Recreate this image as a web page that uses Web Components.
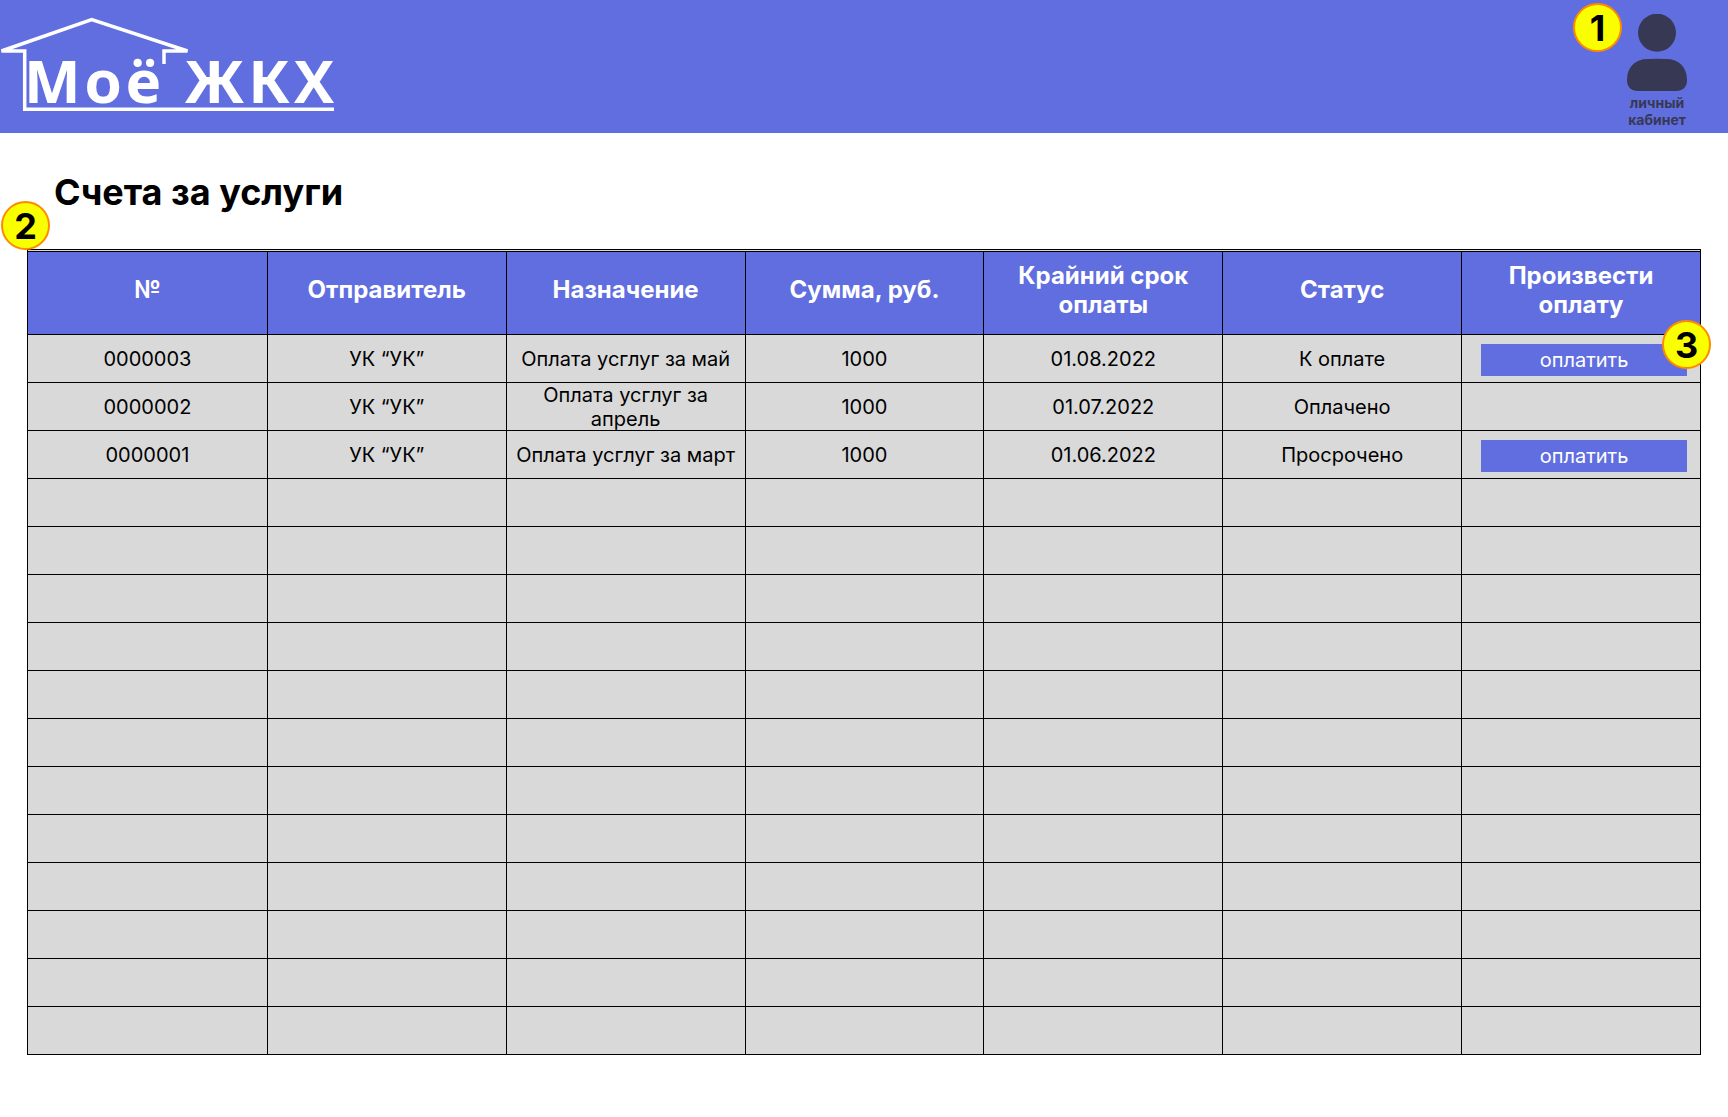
<!DOCTYPE html>
<html lang="ru">
<head>
<meta charset="utf-8">
<title>Моё ЖКХ — Счета за услуги</title>
<style>
  :root {
    --brand: #616ee0;
    --cell: #d9d9d9;
    --ink: #373854;
  }
  body {
    margin: 0;
    background: #fff;
    color: #000;
    font-family: Inter, "Noto Sans", sans-serif;
  }
</style>
</head>
<body>
<billing-page></billing-page>

<script>
  const define = (name, html, setup) => {
    const template = document.createElement('template');
    template.innerHTML = html;
    customElements.define(name, class extends HTMLElement {
      constructor() {
        super();
        this.attachShadow({ mode: 'open' }).append(template.content.cloneNode(true));
        if (setup) setup(this.shadowRoot);
      }
    });
  };

  // Round numbered marker
  define('note-badge', `
    <style>
      :host {
        position: absolute;
        z-index: 1;
        display: flex;
        align-items: center;
        justify-content: center;
        box-sizing: border-box;
        width: 49px;
        height: 49px;
        border: 2px solid #ff8a00;
        border-radius: 50%;
        background: #faff00;
        color: #000;
        font-size: 36px;
        font-weight: 700;
        line-height: 44px;
      }
    </style>
    <slot></slot>`);

  define('brand-logo', `
    <style>
      :host { display: block; }
      a { display: block; }
      svg { display: block; }
      text {
        font-family: "Noto Sans", "Open Sans", sans-serif;
        font-size: 60px;
        font-weight: 700;
        letter-spacing: 4px;
        fill: #fff;
      }
    </style>
    <a href="#" aria-label="Моё ЖКХ">
      <svg width="350" height="133" viewBox="0 0 350 133">
        <path d="M164 64V51H187.500L91.700 19.700L1.500 51H24.700V109.200H334" fill="none" stroke="#fff" stroke-width="3.500"/>
        <text x="24" y="103">Моё ЖКХ</text>
      </svg>
    </a>`);

  define('account-link', `
    <style>
      :host { display: block; position: relative; }
      a {
        display: flex;
        flex-direction: column;
        align-items: center;
        gap: 3px;
        color: var(--ink);
        font-size: 14px;
        font-weight: 700;
        line-height: 17px;
        text-align: center;
        text-decoration: none;
      }
      svg { display: block; fill: var(--ink); }
      span { width: 60px; }
      slot[name="note"]::slotted(*) { top: -11px; right: 65px; }
    </style>
    <a href="#">
      <svg width="60" height="77" viewBox="0 0 60 77" aria-hidden="true">
        <circle cx="30" cy="18.700" r="19"/>
        <path d="M0 66C0 53 8 45 21 45Q30 44.600 39 45C52 45 60 53 60 66C60 73 56 77 49 77H11C4 77 0 73 0 66Z"/>
      </svg>
      <span><slot></slot></span>
    </a>
    <slot name="note"></slot>`);

  define('site-header', `
    <style>
      :host {
        display: flex;
        justify-content: space-between;
        align-items: flex-start;
        height: 133px;
        background: var(--brand);
      }
      account-link { margin: 14px 41px 0 0; }
    </style>
    <brand-logo></brand-logo>
    <account-link>личный кабинет<note-badge slot="note">1</note-badge></account-link>`);

  define('pay-button', `
    <style>
      :host { display: block; width: 100%; }
      button {
        display: block;
        width: 100%;
        height: 32px;
        padding: 0;
        border: 0;
        background: var(--brand);
        color: #fff;
        font: 400 20px/24px Inter, "Noto Sans", sans-serif;
        cursor: pointer;
      }
    </style>
    <button type="button"><slot></slot></button>`);

  const columns = ['№', 'Отправитель', 'Назначение', 'Сумма, руб.', 'Крайний срок оплаты', 'Статус', 'Произвести оплату'];
  const bills = [
    ['0000003', 'УК “УК”', 'Оплата усглуг за май', '1000', '01.08.2022', 'К оплате', '<pay-button>оплатить</pay-button><note-badge>3</note-badge>'],
    ['0000002', 'УК “УК”', 'Оплата усглуг за апрель', '1000', '01.07.2022', 'Оплачено', ''],
    ['0000001', 'УК “УК”', 'Оплата усглуг за март', '1000', '01.06.2022', 'Просрочено', '<pay-button>оплатить</pay-button>']
  ];
  const rowCount = 15;

  define('bills-table', `
    <style>
      :host { display: block; }
      table {
        width: 100%;
        table-layout: fixed;
        border-collapse: separate;
        border-spacing: 0;
        border: 1px solid #000;
        padding-top: 1px;
        background: var(--cell);
        text-align: center;
      }
      th, td { border: 0 solid #000; }
      th + th, td + td { border-left-width: 1px; }
      th {
        height: 75px;
        padding: 0 24px 7px;
        border-top-width: 1px;
        border-bottom-width: 1px;
        background: var(--brand);
        color: #fff;
        font-size: 24px;
        font-weight: 700;
        line-height: 29px;
      }
      td {
        position: relative;
        padding: 0;
        border-bottom-width: 1px;
        font-size: 20px;
        line-height: 24px;
      }
      tr:last-child td { border-bottom-width: 0; }
      td div {
        display: flex;
        align-items: center;
        justify-content: center;
        box-sizing: border-box;
        height: 47px;
        padding: 0 8px;
      }
      td:last-child div { padding: 3px 13px 0 19px; }
      note-badge { top: -15px; right: -11px; }
    </style>
    <table>
      <thead><tr></tr></thead>
      <tbody></tbody>
    </table>`, root => {
      root.querySelector('thead tr').innerHTML = columns.map(c => `<th scope="col">${c}</th>`).join('');
      root.querySelector('tbody').innerHTML = Array.from({ length: rowCount }, (_, i) =>
        `<tr>${columns.map((_, j) => `<td><div>${bills[i] ? bills[i][j] : ''}</div></td>`).join('')}</tr>`).join('');
    });

  define('billing-page', `
    <style>
      :host { display: block; }
      h1 {
        margin: 37px 54px 35px;
        font-size: 36px;
        font-weight: 700;
        line-height: 44px;
      }
      section { position: relative; margin: 0 27px 62px; }
      section > note-badge { top: -48px; left: -26px; }
    </style>
    <site-header></site-header>
    <main>
      <h1>Счета за услуги</h1>
      <section>
        <bills-table></bills-table>
        <note-badge>2</note-badge>
      </section>
    </main>`);
</script>
</body>
</html>
